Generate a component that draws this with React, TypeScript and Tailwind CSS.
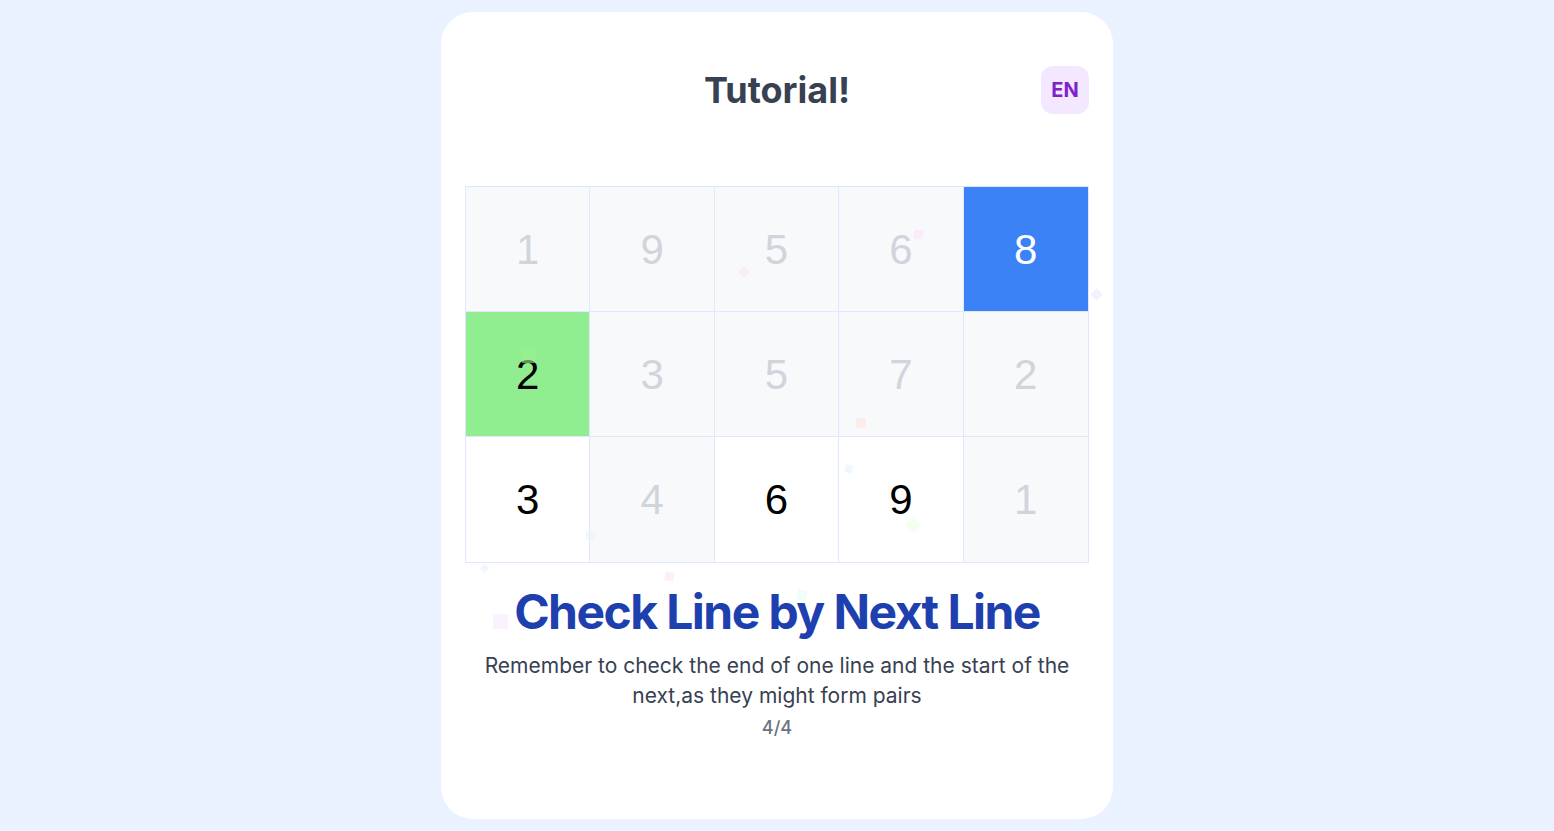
import React from "react";

type Cell = { n: number; kind: "dim" | "open" | "green" | "blue" };

const cells: Cell[] = [
	{ n: 1, kind: "dim" },
	{ n: 9, kind: "dim" },
	{ n: 5, kind: "dim" },
	{ n: 6, kind: "dim" },
	{ n: 8, kind: "blue" },
	{ n: 2, kind: "green" },
	{ n: 3, kind: "dim" },
	{ n: 5, kind: "dim" },
	{ n: 7, kind: "dim" },
	{ n: 2, kind: "dim" },
	{ n: 3, kind: "open" },
	{ n: 4, kind: "dim" },
	{ n: 6, kind: "open" },
	{ n: 9, kind: "open" },
	{ n: 1, kind: "dim" },
];

const cellStyle: Record<Cell["kind"], string> = {
	dim: "bg-[#f8f9fb] text-[#d1d5db]",
	open: "bg-white text-black",
	green: "bg-[#90ee90] text-black",
	blue: "bg-[#3b82f6] text-white",
};

// faint confetti bits scattered over the card
const confetti = [
	{ cls: "left-[299px] top-[256px] w-[8px] h-[8px] bg-[#fbe3f7] rotate-45" },
	{ cls: "left-[473px] top-[218px] w-[9px] h-[9px] bg-[#fbe3f7]" },
	{ cls: "left-[651px] top-[278px] w-[9px] h-[9px] bg-[#ece6ff] rotate-45" },
	{ cls: "left-[415px] top-[406px] w-[10px] h-[10px] bg-[#ffe4e0]" },
	{ cls: "left-[404px] top-[453px] w-[8px] h-[8px] bg-[#e5f2ff] rotate-12" },
	{ cls: "left-[466px] top-[507px] w-[12px] h-[12px] bg-[#ecffe8] rotate-45" },
	{ cls: "left-[145px] top-[519px] w-[9px] h-[9px] bg-[#e8f1ff] rotate-12" },
	{ cls: "left-[40px] top-[553px] w-[7px] h-[7px] bg-[#e8f1ff] rotate-45" },
	{ cls: "left-[224px] top-[560px] w-[9px] h-[9px] bg-[#fce4f7] rotate-12" },
	{ cls: "left-[52px] top-[602px] w-[15px] h-[15px] bg-[#f8eaff]" },
	{ cls: "left-[356px] top-[578px] w-[10px] h-[10px] bg-[#e6fbf3] rotate-12" },
	{ cls: "left-[81px] top-[337px] w-[14px] h-[14px] bg-[#9ef08f]" },
];

export default function App() {
	return (
		<div className="min-h-screen bg-[#eaf1ff] flex justify-center pt-3 font-['Inter',sans-serif]">
			<div className="relative w-[672px] h-[807px] bg-white rounded-[32px] p-6 flex flex-col items-center overflow-hidden">
				{/* header */}
				<div className="relative w-full h-12 mt-[30px] flex items-center justify-center">
					<h1 className="text-4xl font-bold text-[#374151]">Tutorial!</h1>
					<button className="absolute right-0 top-0 w-12 h-12 rounded-xl bg-[#f3e8ff] text-[#7e22ce] text-xl font-bold flex items-center justify-center">
						EN
					</button>
				</div>

				{/* board */}
				<div className="mt-[72px] w-[624px] grid grid-cols-5 border border-[#e0e7ff] font-['Liberation_Sans',Arial,sans-serif]">
					{cells.map((c, i) => (
						<div
							key={i}
							className={`h-[125px] flex items-center justify-center text-[42px] border-[#e0e7ff] ${
								i % 5 !== 4 ? "border-r" : ""
							} ${i < 10 ? "border-b" : ""} ${cellStyle[c.kind]}`}
						>
							{c.n}
						</div>
					))}
				</div>

				<h2 className="mt-[25px] text-5xl leading-none font-bold text-[#1e40af] tracking-[-1.55px]">
					Check Line by Next Line
				</h2>
				<p className="mt-[15px] text-[21px] leading-[30px] text-[#374151] text-center">
					Remember to check the end of one line and the start of the next,as they might form pairs
				</p>
				<p className="mt-[5px] text-lg leading-6 font-medium text-[#6b7280]">4/4</p>

				{confetti.map((c, i) => (
					<span key={i} className={`absolute opacity-60 pointer-events-none ${c.cls}`} />
				))}
			</div>
		</div>
	);
}
